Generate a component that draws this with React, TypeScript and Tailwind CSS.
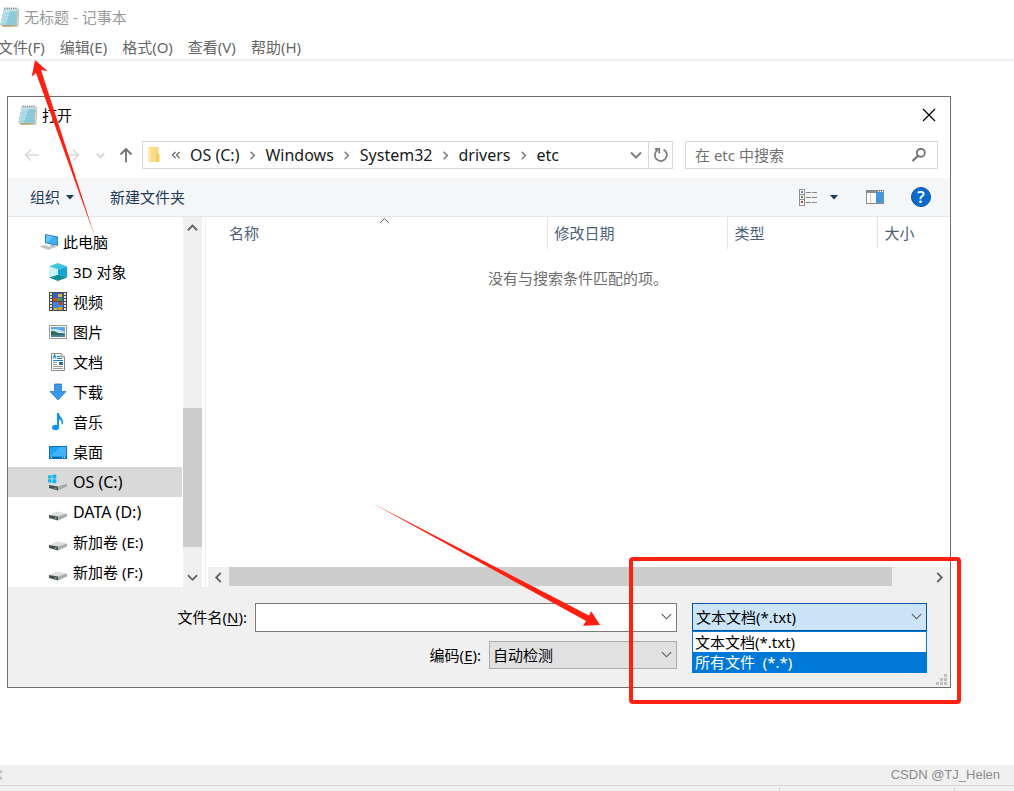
import React, { useState } from "react";

const sans = "font-['Noto_Sans','Noto_Sans_CJK_SC',sans-serif]";

function NotepadIcon() {
  return (
    <svg width="20" height="22" viewBox="0 0 20 22">
      <path d="M4 3 L19.2 3 L18.2 20.5 L3.5 21 L0.5 18.5 Z" fill="#b9a57c" />
      <path d="M4 2.5 L18 2.5 L16.5 19.5 L0.5 18.5 Z" fill="#8ecbd9" />
      <path d="M4 2.5 L11 2.5 L6 18.8 L0.5 18.5 Z" fill="#b4e0e9" />
      <path d="M4 5 L17.5 5 L17.8 2.5 L4.5 2.5 Z" fill="#cfe3e8" />
      <path d="M4 8 H17 M3.5 11 H16.6 M3 14 H16.4 M2 17 H16" stroke="#84c1d0" strokeWidth="0.5" />
      <path d="M5 1.5 V3.5 M7.2 1.5 V3.5 M9.4 1.5 V3.5 M11.6 1.5 V3.5 M13.8 1.5 V3.5 M16 1.5 V3.5" stroke="#7c878d" strokeWidth="1" />
      <path d="M18.2 3.5 L17 20" stroke="#e9e2cf" strokeWidth="1" />
    </svg>
  );
}

function Chevron({ d, size = 11, color = "#606060", width = 2 }: { d: string; size?: number; color?: string; width?: number }) {
  return (
    <svg width={size} height={size} viewBox="0 0 12 12" fill="none" stroke={color} strokeWidth={width}>
      <path d={d} />
    </svg>
  );
}

const UP = "M1 9 L6 4 L11 9";
const DOWN = "M1 3.5 L6 8.5 L11 3.5";
const LEFT = "M8.5 1 L3.5 6 L8.5 11";
const RIGHT = "M3.5 1 L8.5 6 L3.5 11";

function PcIcon() {
  return (
    <svg width="20" height="18" viewBox="0 0 20 18">
      <path d="M6 1 L19 3.5 L19 13 L6 10 Z" fill="#2a7fc0" />
      <path d="M7 2.2 L18 4.4 L18 11.7 L7 9.2 Z" fill="#3fb0f5" />
      <path d="M7 2.2 L14 3.6 L8 9.4 L7 9.2 Z" fill="#6cc6fa" />
      <path d="M11 11.3 L15 12.2 L17 14.6 L12 14.6 Z" fill="#a9b0b5" />
      <path d="M0 13.5 L5 11.8 L14 14.8 L9.5 17.2 Z" fill="#d3d6d9" />
      <path d="M2.5 13.5 L11 16 M4.5 12.7 L12.5 15.2" stroke="#aeb3b7" strokeWidth="0.7" />
    </svg>
  );
}

function CubeIcon() {
  return (
    <svg width="20" height="20" viewBox="0 0 20 20">
      <path d="M1 4.5 L10 1 L19 4.5 L10 7.5 Z" fill="#3cc5d6" />
      <path d="M1 15.5 L10 12.5 L19 15.5 L10 19 Z" fill="#128c99" />
      <path d="M1 4.5 L10 7.5 L10 12.5 L1 15.5 Z" fill="#c8f4f4" />
      <path d="M19 4.5 L10 7.5 L10 12.5 L19 15.5 Z" fill="#14a3d8" />
    </svg>
  );
}

function VideoIcon() {
  const holes = [1, 4, 7, 10, 13, 16];
  return (
    <svg width="20" height="20" viewBox="0 0 20 20" shapeRendering="crispEdges">
      <rect x="1" y="0" width="18" height="19" fill="#4a4a4a" />
      <rect x="5" y="1" width="10" height="8" fill="#2d62c8" />
      <rect x="5" y="10" width="10" height="8" fill="#3f86e0" />
      <rect x="10" y="2" width="4" height="3" fill="#f0b41e" />
      <rect x="5" y="6" width="4" height="3" fill="#e0473c" />
      <rect x="9" y="6" width="5" height="3" fill="#3e9a44" />
      <rect x="11" y="10" width="3" height="3" fill="#c83a2e" />
      <rect x="6" y="16" width="3" height="2" fill="#f0b41e" />
      <rect x="10" y="15" width="4" height="3" fill="#e0a020" />
      {holes.map((y) => (
        <g key={y} fill="#e8e8e8">
          <rect x="2" y={y} width="2" height="2" />
          <rect x="16" y={y} width="2" height="2" />
        </g>
      ))}
    </svg>
  );
}

function PictureIcon() {
  return (
    <svg width="20" height="20" viewBox="0 0 20 20">
      <rect x="1.5" y="3.5" width="17" height="13" fill="#fff" stroke="#9a9a9a" />
      <rect x="3" y="5" width="14" height="10" fill="#5aa7e6" />
      <path d="M3 7.5 Q8 5.5 17 10 V11 H3 Z" fill="#c9e4f7" />
      <path d="M3 9 Q7 8.5 10 11 L17 12 V13 H3 Z" fill="#2d6a58" />
      <rect x="3" y="13" width="14" height="2" fill="#4a7f99" />
    </svg>
  );
}

function DocumentIcon() {
  return (
    <svg width="20" height="20" viewBox="0 0 20 20">
      <path d="M3.5 1.5 H13 L16.5 5 V18.5 H3.5 Z" fill="#fff" stroke="#8a8a8a" />
      <path d="M13 1.5 V5 H16.5" fill="#e5e5e5" stroke="#8a8a8a" />
      <path d="M5 6.5 L6.7 3 L8 6.5 M9 4.5 H12 M9 6.5 H14 M5 8.5 H15" stroke="#0d86e0" strokeWidth="1.2" fill="none" />
      <path d="M5 10.5 H9 M5 12.5 H9 M5 14.5 H15 M5 16.5 H15" stroke="#9b9b9b" />
      <rect x="11" y="10" width="4" height="3" fill="#2b6f9e" />
    </svg>
  );
}

function DownloadIcon() {
  return (
    <svg width="20" height="20" viewBox="0 0 20 20">
      <path d="M6.5 2 H13.5 V9.5 H18 L10 18 L2 9.5 H6.5 Z" fill="#3a97e8" stroke="#2779c4" strokeWidth="0.8" />
    </svg>
  );
}

function MusicIcon() {
  return (
    <svg width="20" height="20" viewBox="0 0 20 20">
      <ellipse cx="7.5" cy="15.5" rx="3.4" ry="2.7" fill="#0a95f2" />
      <path d="M9 1 H11 C11.3 5 15.8 6 15 12 L13.5 12.5 C14.2 9 12.5 8 11 7.2 V15.5 H9 Z" fill="#0a95f2" />
    </svg>
  );
}

function DesktopIcon() {
  return (
    <svg width="20" height="20" viewBox="0 0 20 20">
      <rect x="1.5" y="4.5" width="17" height="12" fill="#1ba1f8" stroke="#0f72b8" />
      <path d="M2 14 L12 5 H18 V14 Z" fill="#42b2fb" />
      <path d="M2 15.5 H18" stroke="#0c5f9e" />
      <path d="M3 15.5 H4 M14 15.5 H15 M16 15.5 H17" stroke="#fff" />
    </svg>
  );
}

function DriveIcon({ system = false }: { system?: boolean }) {
  return (
    <svg width="20" height="20" viewBox="0 0 20 20">
      <path d="M1 13 L9 9.5 L19 11.5 L10 14.5 Z" fill="#dcdee0" />
      <path d="M1 13 L10 14.5 V18.5 L1 16 Z" fill="#4b4e50" />
      <path d="M10 14.5 L19 11.5 V14.5 L10 18.5 Z" fill="#a9abad" />
      <rect x="6.5" y="15.5" width="2" height="1.4" fill="#5fc06a" />
      {system && (
        <g fill="#16b4f0">
          <path d="M0 3.6 L3.5 3 V6.5 H0 Z" />
          <path d="M4.3 2.9 L8.3 2.2 V6.5 H4.3 Z" />
          <path d="M0 7.3 H3.5 V10.8 L0 10.2 Z" />
          <path d="M4.3 7.3 H8.3 V11.5 L4.3 10.9 Z" />
        </g>
      )}
    </svg>
  );
}

const places = [
  { name: "3D 对象", icon: <CubeIcon /> },
  { name: "视频", icon: <VideoIcon /> },
  { name: "图片", icon: <PictureIcon /> },
  { name: "文档", icon: <DocumentIcon /> },
  { name: "下载", icon: <DownloadIcon /> },
  { name: "音乐", icon: <MusicIcon /> },
  { name: "桌面", icon: <DesktopIcon /> },
  { name: "OS (C:)", icon: <DriveIcon system />, latin: true },
  { name: "DATA (D:)", icon: <DriveIcon />, latin: true },
  { name: "新加卷 (E:)", icon: <DriveIcon /> },
  { name: "新加卷 (F:)", icon: <DriveIcon /> },
];

const menus = ["文件(F)", "编辑(E)", "格式(O)", "查看(V)", "帮助(H)"];
const crumbs = ["OS (C:)", "Windows", "System32", "drivers", "etc"];
const fileTypes = ["文本文档(*.txt)", "所有文件  (*.*)"];

function AddressRow() {
  const [query, setQuery] = useState("");
  return (
    <div className="flex items-center pr-3 pt-2">
      <div className="flex w-[134px] shrink-0 items-center pl-4">
        <button type="button" aria-label="后退" className="flex w-4 justify-center">
          <svg width="16" height="14" viewBox="0 0 16 14" fill="none" stroke="#d9d9d9" strokeWidth="1.6">
            <path d="M15 7 H1.5 M7 1.5 L1.5 7 L7 12.5" />
          </svg>
        </button>
        <button type="button" aria-label="前进" className="ml-6 flex w-4 justify-center">
          <svg width="16" height="14" viewBox="0 0 16 14" fill="none" stroke="#d9d9d9" strokeWidth="1.6">
            <path d="M1 7 H14.5 M9 1.5 L14.5 7 L9 12.5" />
          </svg>
        </button>
        <button type="button" aria-label="最近位置" className="ml-3.5 flex w-3 justify-center">
          <Chevron d={DOWN} size={9} color="#cfcfcf" />
        </button>
        <button type="button" aria-label="上移" className="ml-3 flex w-4 justify-center">
          <svg width="14" height="16" viewBox="0 0 14 16" fill="none" stroke="#737373" strokeWidth="1.8">
            <path d="M7 15.5 V2 M1.5 7.5 L7 2 L12.5 7.5" />
          </svg>
        </button>
      </div>
      <div className="flex h-7 min-w-0 flex-1 items-center border border-[#d9d9d9]">
        <svg className="ml-1 shrink-0" width="14" height="18" viewBox="0 0 14 18">
          <path d="M1 1 H9 V16 H1 Z" fill="#fbdc82" />
          <path d="M9 8 H12.5 V16 H9 Z" fill="#f5cb60" />
          <path d="M9 1 H11.5 V8 H9 Z" fill="#f8d674" />
          <path d="M1 1 L4 3.5 V17.5 L1 15.5 Z" fill="#fde9ad" />
        </svg>
        <svg className="ml-2.5 shrink-0" width="10" height="10" viewBox="0 0 10 10" fill="none" stroke="#606060" strokeWidth="1.2">
          <path d="M4.5 2 L1.5 5 L4.5 8 M8.5 2 L5.5 5 L8.5 8" />
        </svg>
        <ol className="ml-[9px] flex items-center text-base leading-6 text-[#1a1a1a]">
          {crumbs.map((c, i) => (
            <li key={c} className="flex items-center">
              {i > 0 && (
                <span className="flex w-[26px] justify-center">
                  <Chevron d={RIGHT} size={9} color="#7a7a7a" />
                </span>
              )}
              <button type="button" className="whitespace-nowrap">{c}</button>
            </li>
          ))}
        </ol>
        <button type="button" aria-label="以前的位置" className="ml-auto flex w-6 shrink-0 justify-center">
          <Chevron d={DOWN} size={12} color="#808080" />
        </button>
        <button type="button" aria-label="刷新" className="flex h-full w-6 shrink-0 items-center justify-center border-l border-[#d9d9d9]">
          <svg width="16" height="16" viewBox="0 0 16 16" fill="none" stroke="#808080" strokeWidth="1.9">
            <path d="M10.5 2.6 A6 6 0 1 1 4.5 3" />
            <path d="M2 2 H6.2 V6.4" />
          </svg>
        </button>
      </div>
      <div className="ml-3 flex h-7 w-[253px] shrink items-center border border-[#d9d9d9]">
        <input
          aria-label="在 etc 中搜索"
          value={query}
          onChange={(e) => setQuery(e.target.value)}
          placeholder="在 etc 中搜索"
          className="h-full min-w-0 flex-1 pl-[9px] text-[15px] outline-none placeholder:text-[#707070]"
        />
        <svg className="mr-2.5" width="16" height="16" viewBox="0 0 16 16" fill="none" stroke="#6a6a6a">
          <circle cx="9.8" cy="5.8" r="4" strokeWidth="1.7" />
          <path d="M7 8.8 L1.5 14" strokeWidth="2" />
        </svg>
      </div>
    </div>
  );
}

function Toolbar() {
  return (
    <div className="mt-[9px] flex h-[39px] items-center border-b border-[#e5e7e9] bg-[#f5f6f7] pl-[22px] pr-[19px] text-[15px] text-[#1e395b]">
      <button type="button" className="flex items-center gap-1.5">
        组织
        <svg width="8" height="5" viewBox="0 0 8 5"><path d="M0 0 H8 L4 4.5 Z" fill="#1e395b" /></svg>
      </button>
      <button type="button" className="ml-9">新建文件夹</button>
      <button type="button" aria-label="更改视图" className="ml-auto">
        <svg width="19" height="17" viewBox="0 0 19 17" shapeRendering="crispEdges">
          <path d="M0.5 0.5 H5.5 V16 H0.5 Z M0.5 5.5 H5.5 M0.5 10.5 H5.5" fill="#fff" stroke="#8d8d8d" />
          <rect x="2" y="2" width="2" height="2" fill="#4a7fb5" />
          <rect x="2" y="7" width="2" height="2" fill="#5a8a50" />
          <rect x="2" y="12" width="2" height="2" fill="#c0392b" />
          <path d="M7 3.5 H12 M13 3.5 H18 M7 8.5 H12 M13 8.5 H18 M7 13.5 H12 M13 13.5 H18" stroke="#858585" />
        </svg>
      </button>
      <button type="button" aria-label="更多选项" className="ml-3">
        <svg width="8" height="5" viewBox="0 0 8 5"><path d="M0 0 H8 L4 4.5 Z" fill="#1e395b" /></svg>
      </button>
      <button type="button" aria-label="显示预览窗格" className="ml-7">
        <svg width="18" height="15" viewBox="0 0 18 15" shapeRendering="crispEdges">
          <rect x="0.5" y="0.5" width="17" height="13" fill="#fff" stroke="#8b8b8b" />
          <rect x="0" y="0" width="18" height="3" fill="#858b90" />
          <path d="M4.5 3 V13" stroke="#c8c8c8" />
          <rect x="10" y="2" width="7" height="11" fill="#3f97e0" />
          <path d="M12 1.5 H13 M14 1.5 H15 M16 1.5 H17" stroke="#fff" />
        </svg>
      </button>
      <button
        type="button"
        aria-label="获取帮助"
        className="ml-[27px] h-5 w-5 rounded-full border border-[#0a4f94] bg-[#0a6cce] text-center text-base font-semibold leading-[18px] text-white"
      >
        ?
      </button>
    </div>
  );
}

function Sidebar() {
  const [selected, setSelected] = useState("OS (C:)");
  return (
    <aside className="flex w-[198px] shrink-0 border-r border-[#f0f0f0]">
      <ul className="flex-1 pt-2.5 text-[15px] text-black">
        <li>
          <button type="button" className="flex h-[30px] w-full items-center gap-1 pl-[31px]">
            <PcIcon />
            此电脑
          </button>
        </li>
        {places.map((p) => (
          <li key={p.name}>
            <button
              type="button"
              onClick={() => setSelected(p.name)}
              className={`flex h-[30px] w-full items-center gap-[5px] pl-10 ${p.latin ? "text-base" : ""} ${
                selected === p.name ? "bg-[#d9d9d9]" : ""
              }`}
            >
              {p.icon}
              {p.name}
            </button>
          </li>
        ))}
      </ul>
      <div className="ml-px mr-[3px] flex w-[19px] flex-col bg-[#f0f0f0]">
        <button type="button" aria-label="向上滚动" className="flex h-5 items-center justify-center"><Chevron d={UP} /></button>
        <div className="flex-1" />
        <div className="h-[139px] bg-[#cdcdcd]" />
        <div className="h-5" />
        <button type="button" aria-label="向下滚动" className="flex h-5 items-center justify-center"><Chevron d={DOWN} /></button>
      </div>
    </aside>
  );
}

function FileList() {
  return (
    <section className="flex min-w-0 flex-1 flex-col">
      <table className="w-full table-fixed border-collapse text-[15px]">
        <thead>
          <tr className="h-8 text-left text-[#4c607a]">
            <th className="relative pl-[23px] font-normal">
              名称
              <span className="absolute inset-x-0 top-0 flex justify-center pl-4">
                <svg width="11" height="7" viewBox="0 0 11 7" fill="none" stroke="#606060">
                  <path d="M1 6 L5.5 1.5 L10 6" />
                </svg>
              </span>
            </th>
            <th className="w-[180px] border-l border-[#e5e5e5] pl-[7px] font-normal">修改日期</th>
            <th className="w-[150px] border-l border-[#e5e5e5] pl-[7px] font-normal">类型</th>
            <th className="w-[73px] border-l border-[#e5e5e5] pl-[7px] font-normal">大小</th>
          </tr>
        </thead>
        <tbody>
          <tr>
            <td colSpan={4} className="pt-[18px] text-center text-[#6d6d6d]">没有与搜索条件匹配的项。</td>
          </tr>
        </tbody>
      </table>
      <div className="ml-0.5 mt-auto flex h-5 bg-[#f0f0f0]">
        <button type="button" aria-label="向左滚动" className="flex w-[21px] items-center justify-center"><Chevron d={LEFT} /></button>
        <div className="mb-px flex-1 bg-[#cdcdcd]" />
        <div className="w-[37px]" />
        <button type="button" aria-label="向右滚动" className="flex w-[21px] items-center justify-center"><Chevron d={RIGHT} /></button>
      </div>
    </section>
  );
}

function SelectArrow() {
  return (
    <span className="pointer-events-none absolute right-[5px] top-2">
      <Chevron d={DOWN} size={11} color="#555555" width={1.2} />
    </span>
  );
}

function DialogFooter() {
  const [fileName, setFileName] = useState("");
  const [type, setType] = useState(fileTypes[0]);
  return (
    <div className="relative flex gap-[15px] bg-[#f0f0f0] pb-[18px] pr-[23px] pt-4 text-[15px] text-black">
      <div className="flex min-w-0 flex-1 flex-col gap-[9px]">
        <div className="flex items-center gap-2">
          <label htmlFor="file-name" className="w-[239px] text-right">
            文件名(<u className="underline-offset-2">N</u>):
          </label>
          <div className="relative min-w-0 flex-1">
            <input
              id="file-name"
              value={fileName}
              onChange={(e) => setFileName(e.target.value)}
              className="block h-[29px] w-full border border-[#7a7a7a] bg-white px-1 outline-none"
            />
            <SelectArrow />
          </div>
        </div>
        <div className="flex items-center justify-end gap-2">
          <label htmlFor="encoding">
            编码(<u className="underline-offset-2">E</u>):
          </label>
          <div className="relative w-[188px]">
            <select id="encoding" className="block h-7 w-full appearance-none border border-[#adadad] bg-[#e1e1e1] pl-[3px]">
              <option>自动检测</option>
            </select>
            <SelectArrow />
          </div>
        </div>
      </div>
      <div className="relative w-[235px]">
        <select
          aria-label="文件类型"
          value={type}
          onChange={(e) => setType(e.target.value)}
          className="block h-7 w-full appearance-none border border-[#0054a0] bg-[#cce4f7] pl-[3px] outline-none"
        >
          {fileTypes.map((t) => (
            <option key={t} value={t}>{t}</option>
          ))}
        </select>
        <SelectArrow />
        <ul role="listbox" aria-label="文件类型列表" className="absolute inset-x-0 top-7 border border-[#0078d7] bg-white leading-5">
          <li role="option" aria-selected={false} className="whitespace-pre pl-0.5">{fileTypes[0]}</li>
          <li role="option" aria-selected className="whitespace-pre bg-[#0078d7] pl-0.5 text-white">{fileTypes[1]}</li>
        </ul>
      </div>
      <svg className="absolute bottom-0.5 right-[3px]" width="11" height="11" viewBox="0 0 11 11" fill="#bfbfbf" shapeRendering="crispEdges">
        <path d="M8 0 h3 v3 h-3z M4 4 h3 v3 h-3z M8 4 h3 v3 h-3z M0 8 h3 v3 h-3z M4 8 h3 v3 h-3z M8 8 h3 v3 h-3z" />
      </svg>
    </div>
  );
}

function OpenDialog() {
  return (
    <div role="dialog" aria-label="打开" className="ml-[7px] mr-[63px] mt-[35px] border border-[#6e6e6e] bg-white">
      <div className="flex h-9 items-center pl-2.5 pr-3.5 text-[15px] text-black">
        <NotepadIcon />
        <h2 className="ml-1">打开</h2>
        <button type="button" aria-label="关闭" className="ml-auto">
          <svg width="14" height="14" viewBox="0 0 14 14" stroke="#000" strokeWidth="1.2">
            <path d="M1 1 L13 13 M13 1 L1 13" />
          </svg>
        </button>
      </div>
      <AddressRow />
      <Toolbar />
      <div className="flex">
        <Sidebar />
        <FileList />
      </div>
      <DialogFooter />
    </div>
  );
}

// hand-drawn hints on top of the windows
function Annotations() {
  return (
    <svg className="pointer-events-none absolute left-0 top-0" width="1014" height="791" viewBox="0 0 1014 791">
      <path d="M35 60 L47.7 71.3 L41 70 L95 237 L36 73 L31.7 76.7 Z" fill="#ff2012" />
      <path d="M600 625 L583 625.7 L586 621 L372 503 L589 615.5 L591.3 611.3 Z" fill="#ff2012" />
      <rect x="631" y="559" width="328" height="143" rx="2" fill="none" stroke="#ff2012" strokeWidth="4" />
    </svg>
  );
}

export default function App(): React.JSX.Element {
  return (
    <div className={`relative flex min-h-screen flex-col overflow-hidden bg-white ${sans}`}>
      <header>
        <div className="flex h-[34px] items-center gap-1 text-[15px] text-[#999999]">
          <NotepadIcon />
          <h1>无标题 - 记事本</h1>
        </div>
        <nav className="-ml-0.5 flex h-[27px] items-center gap-[15px] border-b-2 border-[#f0f0f0] pt-0.5 text-[15px] text-[#666666]">
          {menus.map((m) => (
            <button key={m} type="button">{m}</button>
          ))}
        </nav>
      </header>
      <main className="flex-1">
        <OpenDialog />
      </main>
      <footer className="bg-[#f0f0f0]">
        <div className="flex h-5 items-center justify-between pr-3.5">
          <Chevron d="M2 1.5 L-2 6 L2 10.5" size={12} color="#bfbfbf" />
          <span className="font-['Liberation_Sans',sans-serif] text-[13px] text-[#8c8c8c]">CSDN @TJ_Helen</span>
        </div>
        <div className="flex h-1.5 justify-end border-t border-[#d7d7d7]">
          <div className="mt-px w-[175px] border-l border-[#d7d7d7]" />
          <div className="mt-px w-[60px] border-l border-[#d7d7d7]" />
        </div>
      </footer>
      <Annotations />
    </div>
  );
}
